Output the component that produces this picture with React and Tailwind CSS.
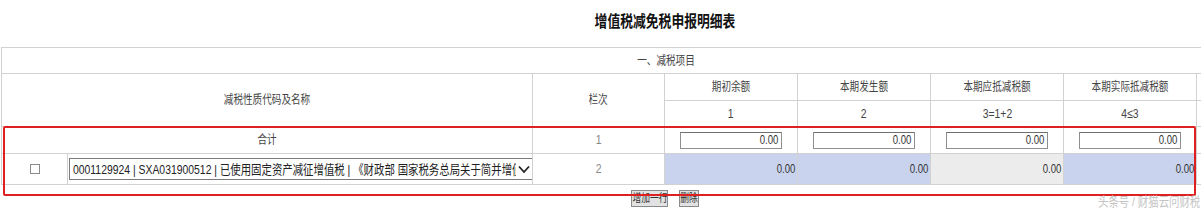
import React from 'react';

const cjk = { fontFamily: '"Liberation Sans", "Noto Sans CJK SC", sans-serif' };

function T({ children, o = 'center', className = '' }) {
  const origins = { center: 'origin-center', right: 'origin-right', left: 'origin-left' };
  return <span className={`inline-block whitespace-nowrap scale-x-[0.8] ${origins[o]} ${className}`}>{children}</span>;
}

function Box({ value = '0.00' }) {
  return (
    <div className="mx-auto w-[102px] h-[17px] border border-[#8f8f8f] border-t-[#6f6f6f] bg-white flex items-center justify-end pr-[3px] text-[12px] text-[#333]">
      <T o="right">{value}</T>
    </div>
  );
}

const cell = 'border border-[#d2d2d2] text-center align-middle p-0';

export default function App() {
  return (
    <div className="relative w-[1201px] h-[210px] overflow-hidden bg-white" style={cjk}>
      <div className="w-[1330px] pl-[1px]">
        <div className="h-[47px] flex items-center justify-center pb-[3px]">
          <T className="text-[16px] font-bold text-[#111]">增值税减免税申报明细表</T>
        </div>

        <table className="border-collapse table-fixed w-[1328px] text-[12px] text-[#444]">
          <colgroup>
            <col className="w-[66px]" />
            <col className="w-[465px]" />
            <col className="w-[132px]" />
            <col className="w-[133px]" />
            <col className="w-[133px]" />
            <col className="w-[133px]" />
            <col className="w-[133px]" />
            <col className="w-[133px]" />
          </colgroup>
          <tbody>
            <tr>
              <td colSpan={8} className={`${cell} h-[26px]`}><T>一、减税项目</T></td>
            </tr>
            <tr>
              <td colSpan={2} rowSpan={2} className={cell}><T>减税性质代码及名称</T></td>
              <td rowSpan={2} className={cell}><T>栏次</T></td>
              <td className={`${cell} h-[27px]`}><T>期初余额</T></td>
              <td className={cell}><T>本期发生额</T></td>
              <td className={cell}><T>本期应抵减税额</T></td>
              <td className={cell}><T>本期实际抵减税额</T></td>
              <td className={cell} />
            </tr>
            <tr>
              <td className={`${cell} h-[26px] text-[13px]`}><T>1</T></td>
              <td className={`${cell} text-[13px]`}><T>2</T></td>
              <td className={`${cell} text-[13px]`}><T>3=1+2</T></td>
              <td className={`${cell} text-[13px]`}><T>4≤3</T></td>
              <td className={cell} />
            </tr>
            <tr>
              <td colSpan={2} className={`${cell} h-[27px]`}><T>合计</T></td>
              <td className={`${cell} text-[13px] text-[#888]`}><T>1</T></td>
              <td className={cell}><Box /></td>
              <td className={cell}><Box /></td>
              <td className={cell}><Box /></td>
              <td className={cell}><Box /></td>
              <td className={cell} />
            </tr>
            <tr>
              <td className={`${cell} h-[31px]`}>
                <div className="mx-auto w-[10px] h-[10px] border border-[#8a8a8a] bg-white" />
              </td>
              <td className={`${cell} pl-[1px]`}>
                <div className="h-[22px] w-[464px] border border-[#7a7a7a] bg-white flex items-center text-[13px] text-[#222]">
                  <div className="flex-1 min-w-0 overflow-hidden pl-[3px] text-left">
                    <T o="left" className="w-[555px] overflow-hidden align-middle">0001129924 | SXA031900512 | 已使用固定资产减征增值税 | 《财政部 国家税务总局关于简并增值税征收率政策的通知》</T>
                  </div>
                  <svg width="12" height="9" viewBox="0 0 12 9" className="mx-[2px] shrink-0">
                    <path d="M1 1.5 L6 7 L11 1.5" fill="none" stroke="#222" strokeWidth="1.8" />
                  </svg>
                </div>
              </td>
              <td className={`${cell} text-[13px] text-[#888]`}><T>2</T></td>
              <td className={`${cell} bg-[#c9d3ee] text-right pr-[2px] text-[#333]`}><T o="right">0.00</T></td>
              <td className={`${cell} bg-[#c9d3ee] text-right pr-[2px] text-[#333]`}><T o="right">0.00</T></td>
              <td className={`${cell} bg-[#ececec] text-right pr-[2px] text-[#333]`}><T o="right">0.00</T></td>
              <td className={`${cell} bg-[#c9d3ee] text-right pr-[2px] text-[#333]`}><T o="right">0.00</T></td>
              <td className={cell} />
            </tr>
          </tbody>
        </table>

        <div className="w-[1328px] flex justify-center gap-[11px] mt-[5px]">
          <button className="h-[17px] w-[37px] border border-[#8a8a8a] bg-[#e2e2e2] text-[11px] leading-none text-[#333] flex items-center justify-center overflow-hidden">
            <T>增加一行</T>
          </button>
          <button className="h-[17px] w-[20px] border border-[#8a8a8a] bg-[#e2e2e2] text-[11px] leading-none text-[#333] flex items-center justify-center overflow-hidden">
            <T>删除</T>
          </button>
        </div>
      </div>

      <div className="absolute left-[3px] top-[126px] w-[1193px] h-[70px] border-2 border-[#df2020] rounded-[2px] pointer-events-none" />

      <div className="absolute left-[1098px] top-[192px] text-[13px] text-[#c4c4c4]">
        <T o="left">头条号 / 财猫云问财税</T>
      </div>
    </div>
  );
}
